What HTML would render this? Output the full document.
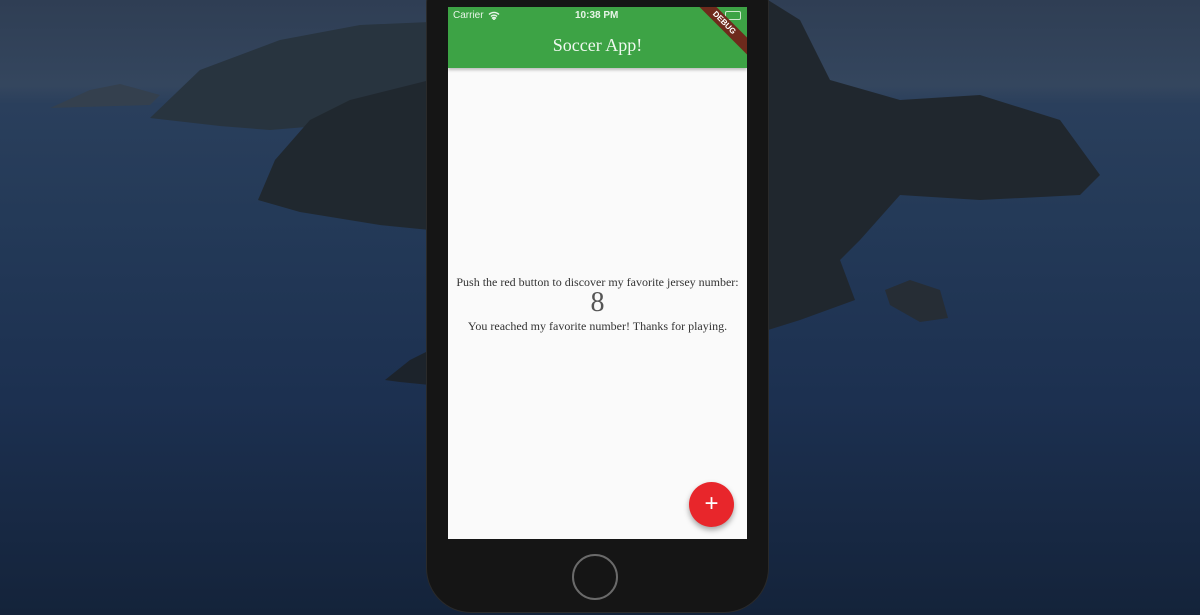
<!DOCTYPE html>
<html><head><meta charset="utf-8"><style>
html,body{margin:0;padding:0;width:1200px;height:615px;overflow:hidden;background:#1a2838;font-family:"Liberation Serif",serif}
.bg{position:absolute;inset:0;background:linear-gradient(180deg,#2f3e54 0%,#34465e 14%,#2a3f5c 17%,#243a58 35%,#1c3050 65%,#14233a 100%)}
svg.land{position:absolute;left:0;top:0}
.phone{position:absolute;left:427px;top:-40px;width:341px;height:652px;background:#151515;border-radius:44px;box-shadow:0 0 0 1px #2a2a2a}
.screen{position:absolute;left:448px;top:7px;width:299px;height:532px;background:#fafafa;overflow:hidden}
.bar{position:absolute;left:0;top:0;width:299px;height:61px;background:#3da345;box-shadow:0 2px 3px rgba(0,0,0,.25)}
.status{position:absolute;top:3px;font-family:"Liberation Sans",sans-serif;font-size:10px;color:#e8f5e8}
.title{position:absolute;top:28px;width:100%;text-align:center;color:#eef8ee;font-size:18px}
.ribbon{position:absolute;right:-17px;top:10px;width:80px;height:12px;background:#6e2a1c;transform:rotate(45deg);color:#fff;font-family:"Liberation Sans",sans-serif;font-weight:bold;font-size:8px;text-align:center;line-height:12px}
.batt{position:absolute;left:277px;top:4px;width:14px;height:7px;border:1px solid #cfe8cf;border-radius:2px}
.t1{position:absolute;top:268px;width:100%;text-align:center;font-size:12px;color:#333}
.num{position:absolute;top:280px;width:100%;text-align:center;font-size:28px;color:#555}
.t2{position:absolute;top:312px;width:100%;text-align:center;font-size:12px;color:#333}
.fab{position:absolute;left:689px;top:482px;width:45px;height:45px;border-radius:50%;background:#e8262b;box-shadow:0 3px 6px rgba(0,0,0,.35);color:#fff;font-family:"Liberation Sans",sans-serif;font-size:24px;text-align:center;line-height:44px}
.home{position:absolute;left:572px;top:554px;width:46px;height:46px;border-radius:50%;border:2px solid #6a6a6a;box-sizing:border-box}
</style></head><body>
<div class="bg"></div>
<svg class="land" width="1200" height="615">
<polygon points="50,108 90,90 120,84 160,95 150,105" fill="#34404e"/>
<polygon points="150,118 200,70 280,40 360,25 430,22 430,105 330,125 270,130 220,126" fill="#28343f"/>
<polygon points="258,200 275,160 310,120 350,100 430,80 430,230 380,225 300,212" fill="#20282f"/>
<polygon points="385,380 410,360 430,350 430,385 400,382" fill="#1c232b"/>
<polygon points="768,0 800,20 830,80 900,100 980,95 1060,120 1100,175 1080,195 980,200 900,195 860,240 840,260 855,300 800,320 768,330" fill="#20272e"/>
<polygon points="885,290 910,280 940,290 948,318 920,322 890,305" fill="#262d35"/>
</svg>
<div class="phone"></div>
<div class="screen">
<div class="bar">
<div class="status" style="left:5px">Carrier</div>
<svg style="position:absolute;left:40px;top:4px" width="12" height="9" viewBox="0 0 12 9"><path d="M1 3.5A7 7 0 0 1 11 3.5M3 5.5A4 4 0 0 1 9 5.5M6 8.5L4.5 7A2 2 0 0 1 7.5 7Z" stroke="#e8f5e8" stroke-width="1.4" fill="#e8f5e8" fill-opacity="0"/></svg>
<div class="status" style="left:127px;font-weight:bold">10:38 PM</div>
<div class="batt"></div>
<div class="title">Soccer App!</div>
<div class="ribbon">DEBUG</div>
</div>
<div class="t1">Push the red button to discover my favorite jersey number:</div>
<div class="num">8</div>
<div class="t2">You reached my favorite number! Thanks for playing.</div>
</div>
<div class="fab">+</div>
<div class="home"></div>
</body></html>
